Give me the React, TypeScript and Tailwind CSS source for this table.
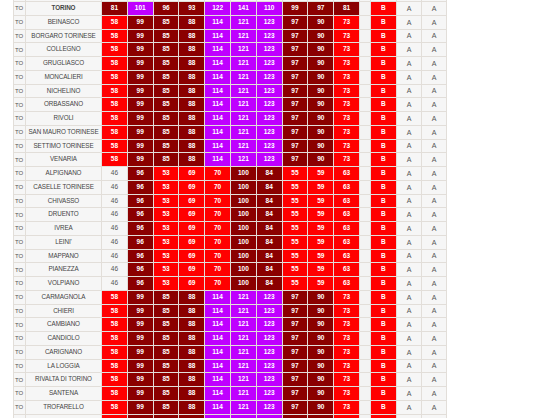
const D = 'bg-[#8b0000] text-white font-bold'
const R = 'bg-[#ff0000] text-white font-bold'
const P = 'bg-[#bf00ff] text-white font-bold'
const W = 'bg-[#f6f6f6] text-[#555]'

type Cell = [string, string]

const TORINO: Cell[] = [
  [D, '81'], [P, '101'], [D, '96'], [D, '93'], [P, '122'],
  [P, '141'], [P, '110'], [D, '99'], [D, '97'], [D, '81'],
]

const GROUP_A: Cell[] = [
  [R, '58'], [D, '99'], [D, '85'], [D, '88'], [P, '114'],
  [P, '121'], [P, '123'], [D, '97'], [D, '90'], [R, '73'],
]

const GROUP_B: Cell[] = [
  [W, '46'], [D, '96'], [R, '53'], [R, '69'], [R, '70'],
  [D, '100'], [D, '84'], [R, '55'], [R, '59'], [R, '63'],
]

const ROWS: { name: string; cells: Cell[]; bold?: boolean }[] = [
  { name: 'TORINO', cells: TORINO, bold: true },
  ...['BEINASCO', 'BORGARO TORINESE', 'COLLEGNO', 'GRUGLIASCO', 'MONCALIERI', 'NICHELINO', 'ORBASSANO', 'RIVOLI', 'SAN MAURO TORINESE', 'SETTIMO TORINESE', 'VENARIA'].map((name) => ({ name, cells: GROUP_A })),
  ...['ALPIGNANO', 'CASELLE TORINESE', 'CHIVASSO', 'DRUENTO', 'IVREA', "LEINI'", 'MAPPANO', 'PIANEZZA', 'VOLPIANO'].map((name) => ({ name, cells: GROUP_B })),
  ...['CARMAGNOLA', 'CHIERI', 'CAMBIANO', 'CANDIOLO', 'CARIGNANO', 'LA LOGGIA', 'RIVALTA DI TORINO', 'SANTENA', 'TROFARELLO'].map((name) => ({ name, cells: GROUP_A })),
]

const GRID = 'grid grid-cols-[13px_76px_repeat(10,25.8px)_11px_26px_25px_25px]'
const CELL = 'flex items-center justify-center border-r border-b border-[#e2ded9] overflow-hidden whitespace-nowrap'

export default function App() {
  return (
    <div className="w-[560px] h-[418px] bg-white overflow-hidden pl-[13px] font-['Liberation_Sans',Arial,sans-serif]">
      <div className={`${GRID} h-[2px]`}>
        {Array.from({ length: 16 }).map((_, i) => (
          <div key={i} className={`border-r border-b border-[#e2ded9] bg-[#f6f6f6] ${i === 0 ? 'border-l' : ''}`} />
        ))}
      </div>
      {[...ROWS, { name: '', cells: GROUP_A }].map((row, i) => (
        <div key={i} className={`${GRID} h-[13.75px] text-[6.5px] leading-none`}>
          <div className={`${CELL} border-l bg-[#f6f6f6] text-[#555] text-[6px] justify-start pl-[1px]`}>{row.name ? 'TO' : ''}</div>
          <div className={`${CELL} bg-[#f6f6f6] text-[#444] text-[6.3px] tracking-[-0.1px] ${row.bold ? 'font-bold' : ''}`}>{row.name}</div>
          {row.cells.map(([cls, v], j) => (
            <div key={j} className={`${CELL} ${cls}`}>{row.name ? v : ''}</div>
          ))}
          <div className={`${CELL} bg-[#f3f3f3]`} />
          <div className={`${CELL} ${R}`}>{row.name ? 'B' : ''}</div>
          <div className={`${CELL} ${W} text-[7px]`}>{row.name ? 'A' : ''}</div>
          <div className={`${CELL} ${W} text-[7px]`}>{row.name ? 'A' : ''}</div>
        </div>
      ))}
    </div>
  )
}
